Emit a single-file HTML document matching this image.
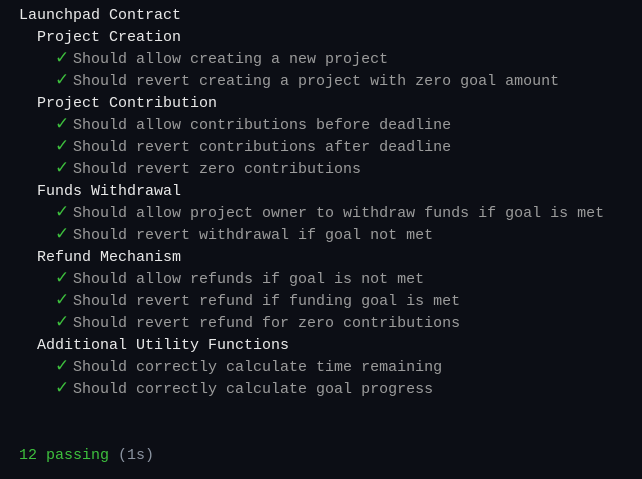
<!DOCTYPE html>
<html><head><style>
html,body{margin:0;padding:0;background:#0c0e15;width:642px;height:479px;overflow:hidden}
pre{margin:0;position:absolute;left:19px;top:5px;font-family:"Liberation Mono","DejaVu Sans Mono",monospace;font-size:15px;line-height:22px;color:#e8e8e8}
.g{color:#9b9b9b}.c{color:#3dbf3d;display:inline-block;width:18px;font-family:"DejaVu Sans",sans-serif;font-size:17px;font-weight:bold;line-height:15px}.p{color:#3dbf3d}.t{color:#8a93a0}
</style></head><body><pre>Launchpad Contract
  Project Creation
    <span class="c">✓</span><span class="g">Should allow creating a new project</span>
    <span class="c">✓</span><span class="g">Should revert creating a project with zero goal amount</span>
  Project Contribution
    <span class="c">✓</span><span class="g">Should allow contributions before deadline</span>
    <span class="c">✓</span><span class="g">Should revert contributions after deadline</span>
    <span class="c">✓</span><span class="g">Should revert zero contributions</span>
  Funds Withdrawal
    <span class="c">✓</span><span class="g">Should allow project owner to withdraw funds if goal is met</span>
    <span class="c">✓</span><span class="g">Should revert withdrawal if goal not met</span>
  Refund Mechanism
    <span class="c">✓</span><span class="g">Should allow refunds if goal is not met</span>
    <span class="c">✓</span><span class="g">Should revert refund if funding goal is met</span>
    <span class="c">✓</span><span class="g">Should revert refund for zero contributions</span>
  Additional Utility Functions
    <span class="c">✓</span><span class="g">Should correctly calculate time remaining</span>
    <span class="c">✓</span><span class="g">Should correctly calculate goal progress</span>


<span class="p">12 passing</span> <span class="t">(1s)</span></pre></body></html>
